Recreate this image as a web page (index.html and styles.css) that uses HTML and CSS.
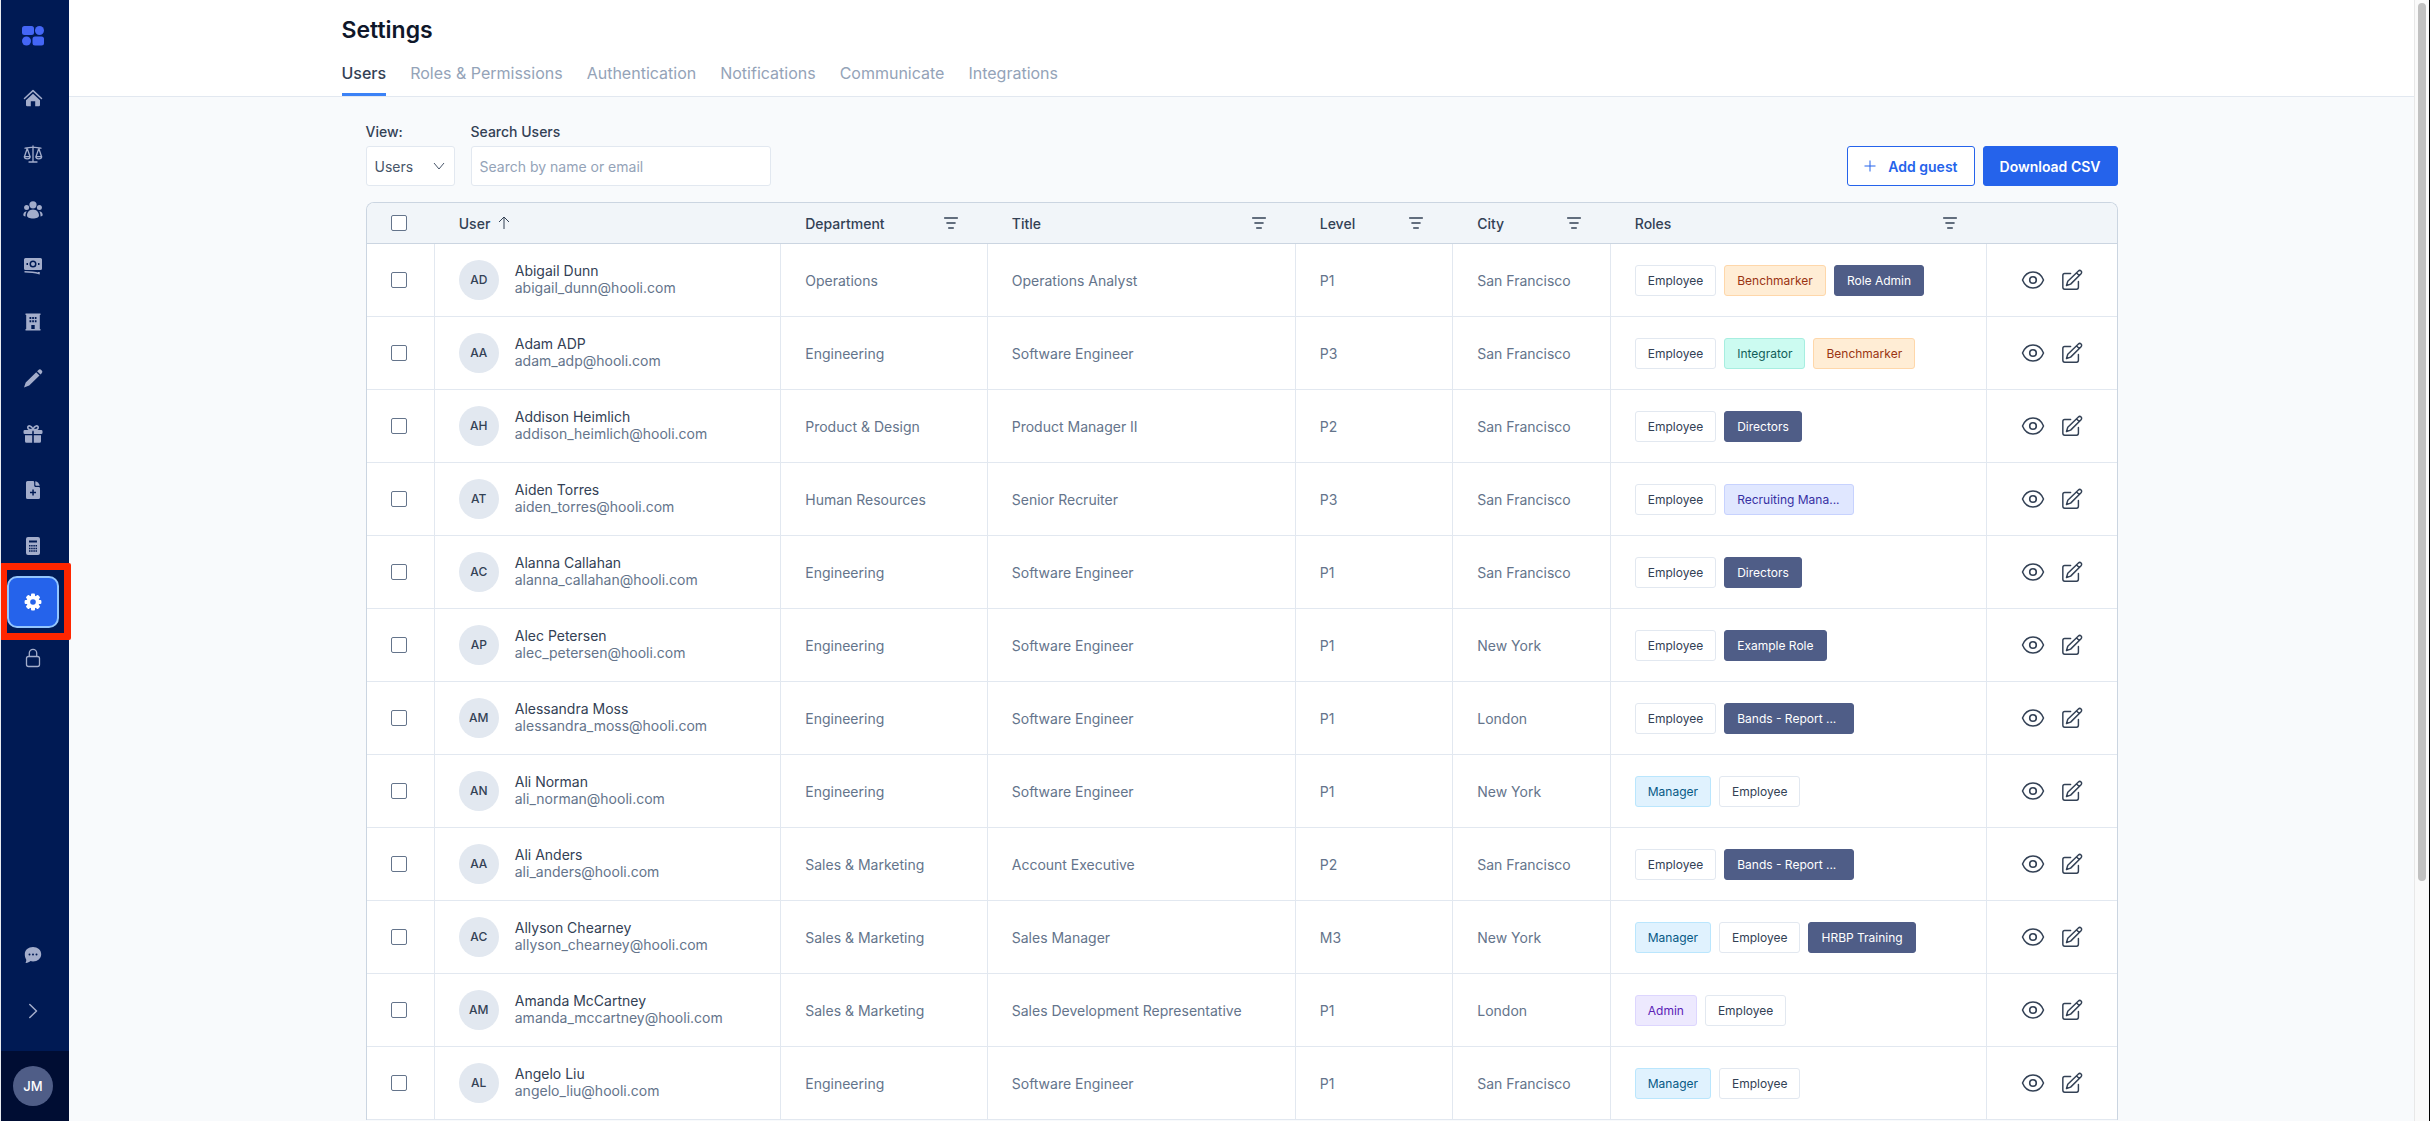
FILE: index.html
```html
<!DOCTYPE html>
<html lang="en">
<head>
	<meta charset="UTF-8">
	<title>Settings</title>
	<link rel="stylesheet" href="styles.css">
</head>
<body>
	<svg class="sprite" aria-hidden="true">
		<symbol id="filter" viewBox="0 0 20 20"><path d="M3 4.5h14M5.500 10h9M7.500 15.500h5" fill="none" stroke="currentColor" stroke-width="1.7" stroke-linecap="round"/></symbol>
		<symbol id="eye" viewBox="0 0 24 24"><path d="M1.500 12C3.500 7 7.300 4 12 4s8.500 3 10.500 8c-2 5-5.800 8-10.500 8S3.500 17 1.500 12z" fill="none" stroke="currentColor" stroke-width="1.5"/><circle cx="12" cy="12" r="3.300" fill="none" stroke="currentColor" stroke-width="1.6"/></symbol>
		<symbol id="edit" viewBox="0 0 24 24"><path d="M10.500 5H4a2 2 0 0 0-2 2v13a2 2 0 0 0 2 2h13a2 2 0 0 0 2-2v-6.500M19 2.200a2 2 0 0 1 2.900 2.900L10.500 16.500 6 18l1.400-4.600zM17 4.300l2.900 2.900" fill="none" stroke="currentColor" stroke-width="1.6" stroke-linejoin="round" stroke-linecap="round"/></symbol>
	</svg>
	<div class="app">
		<nav class="sidebar" aria-label="Main">
			<a class="logo" href="#" aria-label="Start">
				<svg width="22" height="20" viewBox="0 0 22 20" fill="#4466f5"><rect x="0" y="0" width="12" height="9" rx="2.500"/><circle cx="17.500" cy="4.500" r="4.500"/><circle cx="4.500" cy="15" r="4.500"/><rect x="10.500" y="10.500" width="11.500" height="9" rx="2.500"/></svg>
			</a>
			<a class="nav-item" href="#" aria-label="Home">
				<svg width="20" height="20" viewBox="0 0 20 20" fill="currentColor"><path d="M1.500 10.500 10 2.600l8.500 7.900" fill="none" stroke="currentColor" stroke-width="1.500" stroke-linecap="round" stroke-linejoin="round"/><path d="M3 12.200 10 5.700l7 6.500V17a1.200 1.200 0 0 1-1.200 1.200H12.200V13.200H7.800v5H4.200A1.200 1.200 0 0 1 3 17z"/></svg>
			</a>
			<a class="nav-item" href="#" aria-label="Scales">
				<svg width="20" height="20" viewBox="0 0 20 20" fill="none" stroke="currentColor" stroke-width="1.300" stroke-linejoin="round" stroke-linecap="round"><path d="M2 4.200C5 4.200 7 3.200 10 3.200s5 1 8 1M10 1.800v16M6 18h8M4.200 4.500 1.500 12.500M4.200 4.500 7 12.500M15.800 4.500 13 12.500M15.800 4.500l2.700 8M1.300 12.600h5.900c0 3-5.900 3-5.900 0zM12.800 12.600h5.900c0 3-5.900 3-5.900 0z"/></svg>
			</a>
			<a class="nav-item" href="#" aria-label="People">
				<svg width="20" height="20" viewBox="0 0 20 20" fill="currentColor"><circle cx="10" cy="4.800" r="3.600"/><circle cx="3.600" cy="7.400" r="2.500"/><circle cx="16.400" cy="7.400" r="2.500"/><path d="M10 9.500c-3.600 0-6 2.800-6 6 0 2 2.600 3 6 3s6-1 6-3c0-3.200-2.400-6-6-6zM3.700 11.300C1.400 11.600.300 13.300.300 15c0 .700 1 1.200 2.200 1.400-.1-1.900.3-3.600 1.200-5.100zM16.300 11.300c2.300.3 3.400 2 3.400 3.700 0 .7-1 1.200-2.200 1.400.1-1.900-.3-3.600-1.200-5.100z"/></svg>
			</a>
			<a class="nav-item" href="#" aria-label="Pay">
				<svg width="20" height="20" viewBox="0 0 20 20"><path fill="currentColor" fill-rule="evenodd" d="M2.500 2h15a1.500 1.500 0 0 1 1.500 1.500v9a1.500 1.500 0 0 1-1.500 1.500h-15A1.500 1.500 0 0 1 1 12.500v-9A1.500 1.500 0 0 1 2.500 2zM10 4.500a3.500 3.500 0 1 0 0 7 3.500 3.500 0 0 0 0-7zM3.500 7h1.500v2H3.500zM15 7h1.500v2H15z"/><circle cx="10" cy="8" r="2" fill="currentColor"/><path d="M1.500 15.700c6 0 10 .400 14.500 1.800v-1.600" fill="none" stroke="currentColor" stroke-width="1.500"/></svg>
			</a>
			<a class="nav-item" href="#" aria-label="Company">
				<svg width="20" height="20" viewBox="0 0 20 20"><path fill="currentColor" fill-rule="evenodd" d="M2.500 1.500h15V3H16.800v14h.7v1.500h-15V17h.7V3H2.500zM6.500 5v2h1.800V5zM9.200 5v2h1.700V5zM11.800 5v2h1.700V5zM6.500 8.200v2h1.800v-2zM9.200 8.200v2h1.700v-2zM11.800 8.200v2h1.700v-2zM8.300 13v4h3.400v-4z"/></svg>
			</a>
			<a class="nav-item" href="#" aria-label="Edit">
				<svg width="20" height="20" viewBox="0 0 20 20" fill="currentColor"><path d="M15.200 2.200a2.300 2.300 0 0 1 3.300 0 2.300 2.300 0 0 1 0 3.300l-1 1-3.400-3.300zM13.200 4.200l3.300 3.300L6.200 17.600 1 19.400l1.700-5z"/></svg>
			</a>
			<a class="nav-item" href="#" aria-label="Benefits">
				<svg width="20" height="20" viewBox="0 0 20 20" fill="currentColor"><path d="M10 6C8 6 4.800 6 4.800 3.600S8.500 1 10 5.500C11.500 1 15.200 1.200 15.200 3.600S12 6 10 6z" fill="none" stroke="currentColor" stroke-width="1.600"/><path d="M1.800 6h7.400v4H1.800A1.300 1.300 0 0 1 .5 8.700V7.300A1.300 1.300 0 0 1 1.800 6zM10.800 6h7.400a1.300 1.300 0 0 1 1.300 1.300v1.400a1.300 1.300 0 0 1-1.300 1.300h-7.400zM2 11.300h7.200v7.500H3.500A1.500 1.500 0 0 1 2 17.300zM10.800 11.300H18v6a1.500 1.500 0 0 1-1.500 1.500h-5.700z"/></svg>
			</a>
			<a class="nav-item" href="#" aria-label="New document">
				<svg width="20" height="20" viewBox="0 0 20 20"><path fill="currentColor" fill-rule="evenodd" d="M4.500 1H10c.8 0 1.200.6 1.200 1.500v3c0 .9.600 1.500 1.500 1.500h2.800c1 0 1.500.5 1.500 1.500v9a1.500 1.500 0 0 1-1.500 1.500h-11A1.500 1.500 0 0 1 3 17.500v-15A1.500 1.500 0 0 1 4.500 1zM9.300 9.500v2.200H7v1.500h2.300v2.300h1.500v-2.300H13v-1.500h-2.200V9.500z"/><path fill="currentColor" d="M12.300 1.200c2.300.5 4 2.200 4.500 4.600h-3.300c-.7 0-1.200-.4-1.200-1.100z"/></svg>
			</a>
			<a class="nav-item" href="#" aria-label="Calculator">
				<svg width="20" height="20" viewBox="0 0 20 20"><path fill="currentColor" fill-rule="evenodd" d="M5 1h10a2 2 0 0 1 2 2v14a2 2 0 0 1-2 2H5a2 2 0 0 1-2-2V3a2 2 0 0 1 2-2zM6 4.500v2h8v-2z"/><path d="M6 9.800h8M6 12.400h8M6 15h8" stroke="#001a54" stroke-width="1.500" stroke-dasharray="1.500 .670" fill="none"/></svg>
			</a>
			<a class="nav-item active" href="#" aria-label="Settings" aria-current="page">
				<svg width="20" height="20" viewBox="0 0 20 20"><g fill="currentColor"><circle cx="10" cy="10" r="6.500"/><g id="tooth"><rect x="8" y="1.600" width="4" height="16.800" rx="1"/><rect x="1.600" y="8" width="16.800" height="4" rx="1"/></g><use href="#tooth" transform="rotate(45 10 10)"/></g><circle cx="10" cy="10" r="2.800" fill="#2563eb"/></svg>
			</a>
			<a class="nav-item" href="#" aria-label="Security">
				<svg width="20" height="20" viewBox="0 0 20 20" fill="none" stroke="currentColor" stroke-width="1.300"><rect x="3.500" y="8.500" width="13" height="10" rx="2"/><path d="M6.300 8.500V5a3.700 3.700 0 0 1 7.400 0v3.500"/></svg>
			</a>
			<div class="nav-bottom">
				<button class="nav-item" type="button" aria-label="Chat">
					<svg width="20" height="20" viewBox="0 0 20 20"><path fill="currentColor" d="M10 2c4.600 0 8.200 3 8.200 7.200s-3.600 7.200-8.200 7.200c-.9 0-1.700-.1-2.500-.3C6 17.500 4 18.200 2.300 17.800c.8-.8 1.100-2 .9-3.300C2.200 13 1.800 11.200 1.800 9.200 1.800 5 5.400 2 10 2z"/><g fill="#001a54"><circle cx="6.500" cy="9.500" r="1"/><circle cx="10" cy="9.500" r="1"/><circle cx="13.500" cy="9.500" r="1"/></g></svg>
				</button>
				<button class="nav-item" type="button" aria-label="Expand">
					<svg width="20" height="20" viewBox="0 0 20 20" fill="none" stroke="currentColor" stroke-width="1.500" stroke-linecap="round" stroke-linejoin="round"><path d="M6.800 3.500 13.500 10l-6.700 6.500"/></svg>
				</button>
			</div>
			<div class="account">
				<span class="me">JM</span>
			</div>
		</nav>
		<main class="main">
			<header class="page-header">
				<div class="header-inner">
					<h1>Settings</h1>
					<nav class="tabs" aria-label="Settings">
						<a class="tab selected" href="#">Users</a>
						<a class="tab" href="#">Roles &amp; Permissions</a>
						<a class="tab" href="#">Authentication</a>
						<a class="tab" href="#">Notifications</a>
						<a class="tab" href="#">Communicate</a>
						<a class="tab" href="#">Integrations</a>
					</nav>
				</div>
			</header>
			<div class="content">
				<div class="toolbar">
					<div class="field">
						<label for="view">View:</label>
						<span class="select-wrap">
							<select id="view"><option>Users</option></select>
							<svg class="caret" width="12" height="12" viewBox="0 0 12 12" fill="none" stroke="currentColor"><path d="M1 3l5 6 5-6"/></svg>
						</span>
					</div>
					<div class="field">
						<label for="search">Search Users</label>
						<input id="search" type="text" placeholder="Search by name or email">
					</div>
					<div class="actions">
						<button class="btn" type="button"><svg width="12" height="12" viewBox="0 0 12 12" fill="none" stroke="currentColor"><path d="M6 .5v11M.5 6h11"/></svg>Add guest</button>
						<button class="btn primary" type="button">Download CSV</button>
					</div>
				</div>
				<div class="table-wrap">
					<table>
						<colgroup>
							<col class="c-check"><col class="c-user"><col class="c-dept"><col class="c-title"><col class="c-level"><col class="c-level"><col class="c-roles"><col class="c-edit">
						</colgroup>
						<thead>
							<tr>
								<th><input type="checkbox" aria-label="Select all users"></th>
								<th><div class="th"><span>User</span><svg class="sort" width="16" height="16" viewBox="0 0 16 16" fill="none" stroke="currentColor"><path d="M8 14V2M3 7l5-5 5 5"/></svg></div></th>
								<th><div class="th">Department<button type="button" aria-label="Filter department"><svg width="18" height="18"><use href="#filter"/></svg></button></div></th>
								<th><div class="th">Title<button type="button" aria-label="Filter title"><svg width="18" height="18"><use href="#filter"/></svg></button></div></th>
								<th><div class="th">Level<button type="button" aria-label="Filter level"><svg width="18" height="18"><use href="#filter"/></svg></button></div></th>
								<th><div class="th">City<button type="button" aria-label="Filter city"><svg width="18" height="18"><use href="#filter"/></svg></button></div></th>
								<th><div class="th">Roles<button type="button" aria-label="Filter roles"><svg width="18" height="18"><use href="#filter"/></svg></button></div></th>
								<th></th>
							</tr>
						</thead>
						<tbody id="users"></tbody>
					</table>
				</div>
			</div>
		</main>
		<div class="scrollbar"><div class="thumb"></div></div>
	</div>
	<script src="users.js"></script>
</body>
</html>
```
FILE: styles.css
```css
*,*::after{box-sizing:border-box;}
body{
	margin:0;
	font-family:Inter,"Liberation Sans",sans-serif;
	font-size:14px;
	color:#334155;
	background:#f8fafc;
}
a{text-decoration:none;color:inherit;}
button,input,select{font:inherit;color:inherit;}
button{cursor:pointer;}
svg{display:block;flex:none;}
.sprite{position:absolute;width:0;height:0;}
.app{
	display:flex;
	height:100vh;
	overflow:hidden;
	border-left:1px solid #e8ebf0;
}

/* sidebar */
.sidebar{
	display:flex;
	flex-direction:column;
	flex:none;
	align-items:center;
	gap:4px;
	width:68px;
	background:#001a54;
	color:#a3adcb;
}
.logo,.nav-item{
	display:flex;
	align-items:center;
	justify-content:center;
	flex:none;
	width:52px;
	height:52px;
	margin-right:4px;
}
.logo{height:68px;padding-top:4px;}
.nav-item{
	position:relative;
	padding:0;
	border:0;
	background:none;
	border-radius:10px;
}
.nav-item.active{
	color:#fff;
	background:#2563eb;
	border:2px solid #93c5fd;
}
/* highlight frame round the current item */
.nav-item.active::after{
	content:'';
	position:absolute;
	top:-15px;
	left:-9px;
	width:71px;
	height:77px;
	border:7px solid #ff2600;
	border-radius:2px;
	z-index:1;
}
.nav-bottom{
	display:flex;
	flex-direction:column;
	gap:4px;
	margin-top:auto;
	padding-bottom:10px;
}
.account{
	display:flex;
	flex:none;
	align-items:center;
	justify-content:center;
	width:100%;
	height:70px;
	padding-right:4px;
	background:#000d33;
}
.me{
	width:40px;
	height:40px;
	border-radius:50%;
	background:#4f5d87;
	color:#fff;
	font-size:13px;
	font-weight:500;
	line-height:40px;
	text-align:center;
}

/* header */
.main{flex:1;min-width:0;overflow:hidden;}
.page-header{background:#fff;border-bottom:1px solid #e2e8f0;}
.header-inner{
	max-width:1848px;
	margin:0 auto;
	padding:15px 24px 0;
}
h1{
	margin:0;
	font-size:23px;
	line-height:30px;
	font-weight:600;
	color:#0f172a;
}
.tabs{display:flex;gap:24px;margin-top:12px;}
.tab{
	padding:6px 0 10px;
	font-size:16px;
	line-height:20px;
	color:#94a3b8;
	border-bottom:3px solid transparent;
}
.tab.selected{font-weight:500;color:#334155;border-color:#3b82f6;}

/* toolbar */
.content{max-width:1800px;margin:0 auto;padding:25px 24px 0;}
.toolbar{display:flex;align-items:flex-end;gap:16px;margin-bottom:16px;}
.field{display:flex;flex-direction:column;gap:4px;}
.field label{font-weight:500;line-height:20px;}
.field input,.field select{
	height:40px;
	padding:0 8px;
	border:1px solid #e2e8f0;
	border-radius:3px;
	background:#fff;
}
.field input{width:300px;}
.field input::placeholder{color:#94a3b8;opacity:1;}
.select-wrap{display:flex;position:relative;color:#475569;}
.select-wrap select{width:89px;appearance:none;}
.caret{position:absolute;right:10px;top:14px;pointer-events:none;}
.actions{display:flex;gap:8px;margin-left:auto;}
.btn{
	display:flex;
	align-items:center;
	gap:12px;
	height:40px;
	padding:0 16px;
	border:1px solid #2563eb;
	border-radius:3px;
	background:#fff;
	color:#2563eb;
	font-weight:600;
	white-space:nowrap;
}
.btn.primary{background:#2563eb;color:#fff;}

/* table */
.table-wrap{
	overflow:hidden;
	border:1px solid #cbd5e1;
	border-bottom:0;
	border-radius:8px 8px 0 0;
	background:#fff;
}
table{width:100%;table-layout:fixed;border-collapse:separate;border-spacing:0;}
.c-check{width:3.9%;}
.c-user{width:19.8%;}
.c-dept{width:11.8%;}
.c-title{width:17.6%;}
.c-level{width:9%;}
.c-roles{width:21.5%;}
th{
	height:41px;
	padding:0 24px;
	background:#f1f5f9;
	border-bottom:1px solid #cbd5e1;
	font-weight:500;
	text-align:left;
}
.th{display:flex;align-items:center;}
.th button{margin:0 4px 0 auto;padding:0;border:0;background:none;}
.sort{margin-left:6px;}
td{
	height:73px;
	padding:0 24px;
	border-right:1px solid #e2e8f0;
	border-bottom:1px solid #e2e8f0;
	color:#64748b;
	white-space:nowrap;
}
td:last-child{border-right:0;}
input[type=checkbox]{
	display:block;
	appearance:none;
	width:16px;
	height:16px;
	margin:0;
	border:1px solid #64748b;
	border-radius:2px;
	background:#fff;
}
.user{display:flex;align-items:center;gap:16px;line-height:17px;}
.avatar{
	flex:none;
	width:40px;
	height:40px;
	border-radius:50%;
	background:#e2e8f0;
	color:#334155;
	font-size:12px;
	font-weight:500;
	line-height:40px;
	text-align:center;
}
/* lifts the name and email a little above the avatar's centre */
.who{padding-bottom:3px;}
.name{display:block;color:#334155;}
.tags{display:flex;gap:8px;}
.tag{
	padding:0 12px;
	border:1px solid #e2e8f0;
	border-radius:3px;
	font-size:12px;
	line-height:29px;
	color:#334155;
}
.tag.long{width:130px;}
.tag.dark{background:#4f5d87;border-color:#4f5d87;color:#fff;}
.tag.orange{background:#ffedd5;border-color:#fed7aa;color:#9a3412;}
.tag.teal{background:#ccfbf1;border-color:#a7eee0;color:#115e59;}
.tag.indigo{background:#e0e7ff;border-color:#c7d2fe;color:#3730a3;}
.tag.sky{background:#e0f2fe;border-color:#bae6fd;color:#075985;}
.tag.violet{background:#ede9fe;border-color:#ddd6fe;color:#5b21b6;}
.row-actions{display:flex;align-items:center;justify-content:center;gap:16px;color:#334155;}
.row-actions button{padding:0;border:0;background:none;}

/* scrollbar */
.scrollbar{
	flex:none;
	width:16px;
	padding:3px 3px 0;
	border-left:1px solid #e8e8e8;
	border-right:1px solid #000;
	background:#fafafa;
}
.thumb{width:8px;height:78.5%;border-radius:4px;background:#c1c1c1;}
```
FILE: users.js
```js
var users = [
	['Abigail Dunn', 'Operations', 'Operations Analyst', 'P1', 'San Francisco', ['Employee', 'Benchmarker', 'Role Admin']],
	['Adam ADP', 'Engineering', 'Software Engineer', 'P3', 'San Francisco', ['Employee', 'Integrator', 'Benchmarker']],
	['Addison Heimlich', 'Product & Design', 'Product Manager II', 'P2', 'San Francisco', ['Employee', 'Directors']],
	['Aiden Torres', 'Human Resources', 'Senior Recruiter', 'P3', 'San Francisco', ['Employee', 'Recruiting Mana...']],
	['Alanna Callahan', 'Engineering', 'Software Engineer', 'P1', 'San Francisco', ['Employee', 'Directors']],
	['Alec Petersen', 'Engineering', 'Software Engineer', 'P1', 'New York', ['Employee', 'Example Role']],
	['Alessandra Moss', 'Engineering', 'Software Engineer', 'P1', 'London', ['Employee', 'Bands - Report ...']],
	['Ali Norman', 'Engineering', 'Software Engineer', 'P1', 'New York', ['Manager', 'Employee']],
	['Ali Anders', 'Sales & Marketing', 'Account Executive', 'P2', 'San Francisco', ['Employee', 'Bands - Report ...']],
	['Allyson Chearney', 'Sales & Marketing', 'Sales Manager', 'M3', 'New York', ['Manager', 'Employee', 'HRBP Training']],
	['Amanda McCartney', 'Sales & Marketing', 'Sales Development Representative', 'P1', 'London', ['Admin', 'Employee']],
	['Angelo Liu', 'Engineering', 'Software Engineer', 'P1', 'San Francisco', ['Manager', 'Employee']]
];
var colors = {
	'Employee': '',
	'Benchmarker': 'orange',
	'Integrator': 'teal',
	'Recruiting Mana...': 'indigo long',
	'Bands - Report ...': 'dark long',
	'Manager': 'sky',
	'Admin': 'violet'
};

function esc(text){
	return text.replace('&', '&amp;');
}

document.getElementById('users').innerHTML = users.map(function(u){
	var words = u[0].split(' ');
	var initials = words[0][0] + words[1][0];
	var email = u[0].toLowerCase().replace(' ', '_') + '@hooli.com';
	var tags = u[5].map(function(role){
		var color = role in colors ? colors[role] : 'dark';
		return '<span class="tag ' + color + '">' + role + '</span>';
	}).join('');
	return '<tr>' +
		'<td><input type="checkbox" aria-label="Select ' + u[0] + '"></td>' +
		'<td><div class="user"><span class="avatar">' + initials + '</span><div class="who"><span class="name">' + u[0] + '</span>' + email + '</div></div></td>' +
		'<td>' + esc(u[1]) + '</td>' +
		'<td>' + u[2] + '</td>' +
		'<td>' + u[3] + '</td>' +
		'<td>' + u[4] + '</td>' +
		'<td><div class="tags">' + tags + '</div></td>' +
		'<td><div class="row-actions">' +
		'<button type="button" aria-label="View ' + u[0] + '"><svg width="24" height="24"><use href="#eye"/></svg></button>' +
		'<button type="button" aria-label="Edit ' + u[0] + '"><svg width="22" height="22"><use href="#edit"/></svg></button>' +
		'</div></td>' +
		'</tr>';
}).join('');
```
